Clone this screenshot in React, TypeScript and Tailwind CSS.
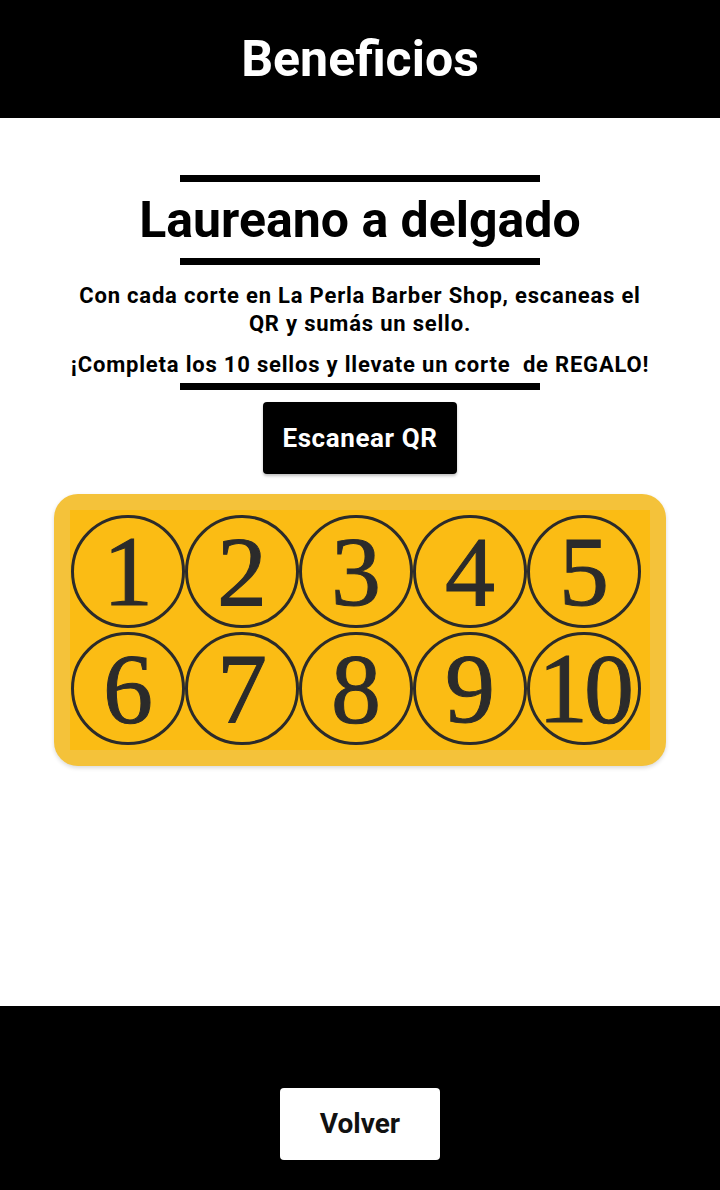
import React from "react";

const nums = [1, 2, 3, 4, 5, 6, 7, 8, 9, 10];

export default function App() {
  return (
    <div className="w-[720px] h-[1190px] flex flex-col bg-white font-['Roboto',sans-serif]">
      <header className="h-[118px] bg-black flex items-center justify-center">
        <h1 className="text-white font-bold text-[50px] leading-none">Beneficios</h1>
      </header>
      <main className="flex-1 flex flex-col items-center pt-[57px]">
        <div className="w-[360px] h-[7px] bg-black" />
        <h2 className="h-[76px] flex items-center text-black font-bold text-[50px] leading-none">Laureano a delgado</h2>
        <div className="w-[360px] h-[7px] bg-black" />
        <p className="mt-[17px] w-[590px] text-center font-bold text-[22px] tracking-[0.8px] leading-[28px] text-black">
          Con cada corte en La Perla Barber Shop, escaneas el QR y sumás un sello.
        </p>
        <p className="mt-[13px] text-center font-bold text-[22px] tracking-[0.8px] leading-[28px] text-black whitespace-pre">
          ¡Completa los 10 sellos y llevate un corte  de REGALO!
        </p>
        <div className="mt-[4px] w-[360px] h-[7px] bg-black" />
        <button className="mt-[12px] w-[194px] h-[72px] bg-black rounded-[4px] text-white font-bold text-[26px] tracking-[0.6px] shadow-[0_2px_3px_rgba(0,0,0,0.25)]">
          Escanear QR
        </button>
        <div className="mt-[20px] w-[612px] h-[272px] rounded-[24px] bg-[#f4c23a] p-[16px] shadow-[0_2px_4px_rgba(0,0,0,0.15)]">
          <div className="w-full h-full bg-[#fbbc14] grid grid-cols-[repeat(5,114px)] content-center gap-y-[4px] pl-[1px]">
            {nums.map((n) => (
              <div
                key={n}
                className="w-[114px] h-[113px] rounded-full border-[3px] border-[#2b2b2b] flex items-center justify-center font-['Liberation_Serif',serif] text-[#2b2b2b] text-[100px] leading-none [-webkit-text-stroke:1px_#2b2b2b]"
              >
                <span className={n === 10 ? "tracking-[-4px]" : ""}>{n}</span>
              </div>
            ))}
          </div>
        </div>
      </main>
      <footer className="h-[184px] bg-black flex items-end justify-center pb-[30px]">
        <button className="w-[160px] h-[72px] bg-white rounded-[4px] text-[#111] font-bold text-[28px]">
          Volver
        </button>
      </footer>
    </div>
  );
}
